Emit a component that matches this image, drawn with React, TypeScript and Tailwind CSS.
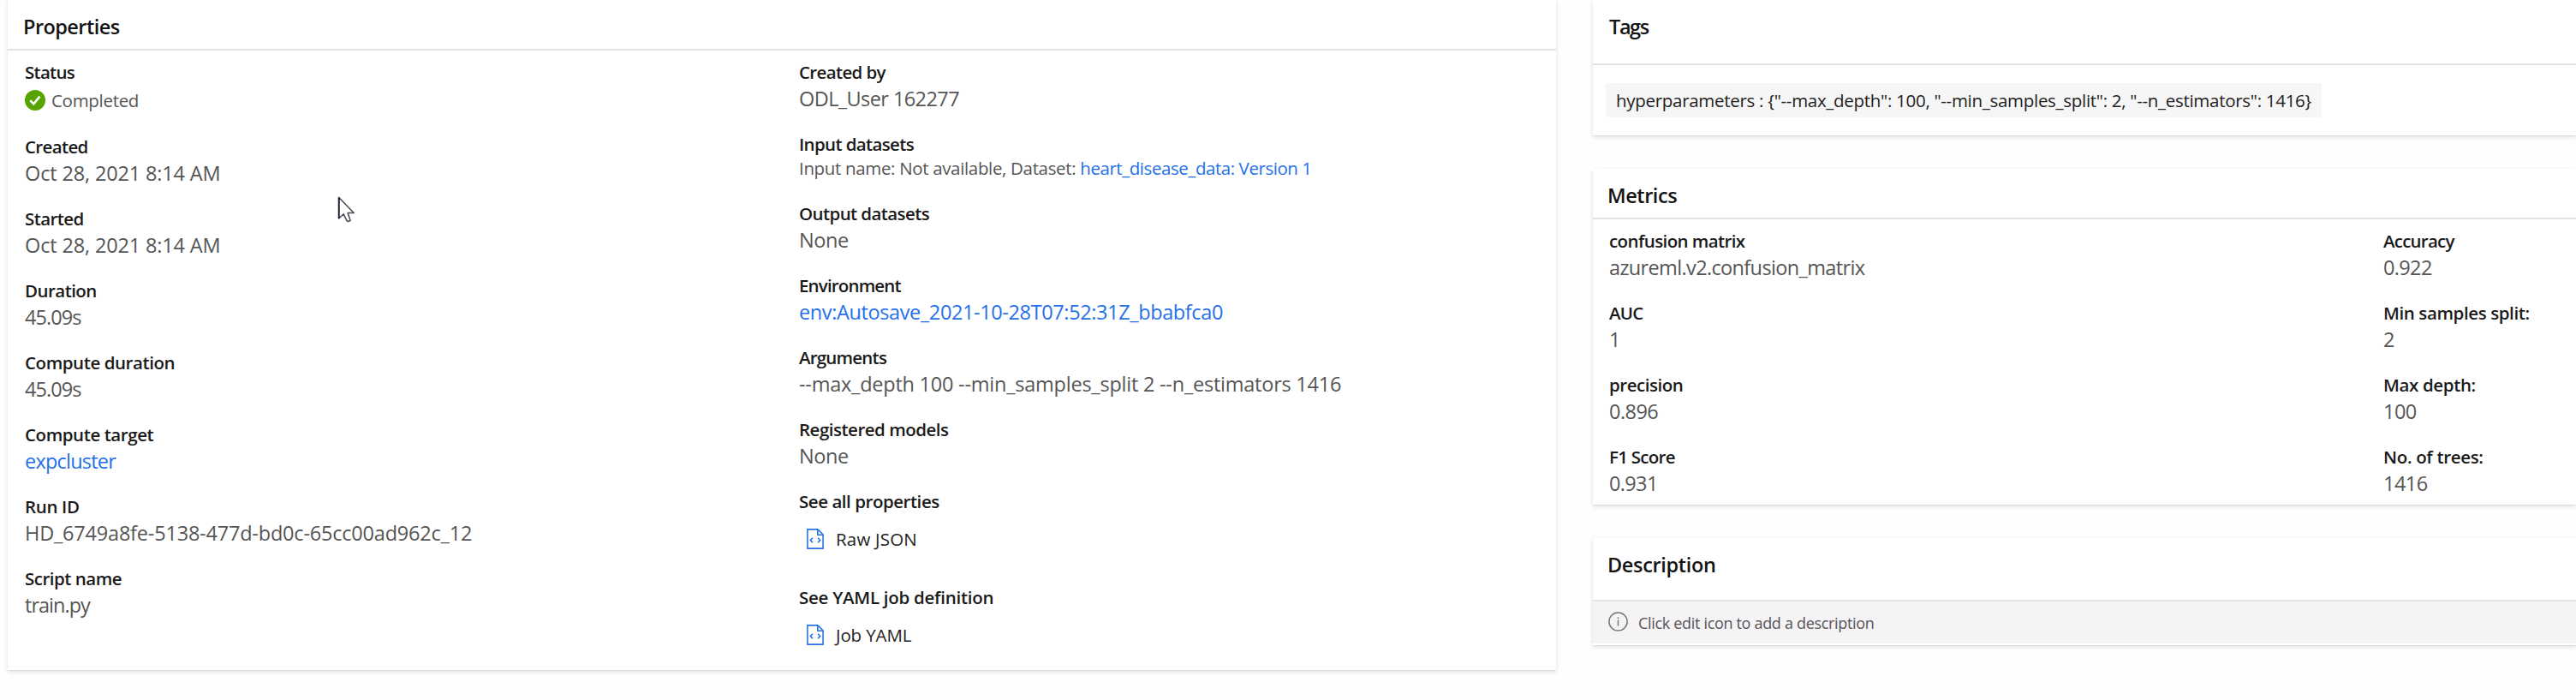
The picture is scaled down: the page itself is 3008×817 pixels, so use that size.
import type { ReactNode } from "react";

type Field = {
  label: string;
  labelTracking: string;
  value: ReactNode;
};

function Panel({ className, children }: { className: string; children: ReactNode }) {
  return (
    <section
      className={`bg-white shadow-[0_2px_5px_rgba(60,20,50,0.14),0_1px_1px_rgba(60,20,50,0.06)] ${className}`}
    >
      {children}
    </section>
  );
}

function PanelHeader({ title, className }: { title: string; className: string }) {
  return (
    <header className={`shrink-0 border-b-2 border-[#e4e3e4] pt-[15px] ${className}`}>
      <h2 className="text-[23.5px] leading-8 font-semibold text-[#141414]">{title}</h2>
    </header>
  );
}

function Value({ tracking, link = false, children }: { tracking: string; link?: boolean; children: ReactNode }) {
  return (
    <div className={`text-[23.5px] leading-8 ${tracking} ${link ? "text-[#2470e8]" : "text-[#555]"}`}>{children}</div>
  );
}

function FieldBlock({ label, labelTracking, value }: Field) {
  return (
    <div className="pb-[22px]">
      <div className={`text-[20.5px] leading-[30px] font-semibold text-[#1a1a1a] ${labelTracking}`}>{label}</div>
      {value}
    </div>
  );
}

function CheckIcon() {
  return (
    <svg className="size-6 shrink-0" viewBox="0 0 24 24">
      <circle cx="12" cy="12" r="12" fill="#57a300" />
      <path d="M6.3 12.2 10.3 16.4 17.4 7.6" fill="none" stroke="#fff" strokeWidth="2.6" />
    </svg>
  );
}

function FileCodeIcon() {
  return (
    <svg className="h-6 w-5 shrink-0" viewBox="0 0 20 24" fill="none" stroke="#2b74dd" strokeWidth="1.6">
      <path d="M.9.9H13L19.1 7V23.1H.9Z" />
      <path d="M12.8.9V7.2H19.1" />
      <path d="M7 10.8 4.4 13.5 7 16.2M13 10.8 15.6 13.5 13 16.2" />
    </svg>
  );
}

function InfoIcon() {
  return (
    <svg className="size-[23px] shrink-0" viewBox="0 0 23 23" fill="none" stroke="#777" strokeWidth="1.5">
      <circle cx="11.5" cy="11.5" r="10.6" />
      <path d="M11.5 9.5V16.6M11.5 6.2V7.9" />
    </svg>
  );
}

function FileAction({ tracking, children }: { tracking: string; children: ReactNode }) {
  return (
    <div className="flex h-[60px] items-start gap-[14px] pt-[17px] pl-[9px]">
      <FileCodeIcon />
      <span className={`-mt-[3px] text-[20.5px] leading-[30px] text-[#222] ${tracking}`}>{children}</span>
    </div>
  );
}

const leftFields: Field[] = [
  {
    label: "Status",
    labelTracking: "tracking-[-0.74px]",
    value: (
      <div className="flex h-[35px] items-start gap-[7px] pt-[6px]">
        <CheckIcon />
        <span className="-mt-[3px] text-[20.5px] leading-[30px] tracking-[-0.3px] text-[#555]">Completed</span>
      </div>
    ),
  },
  { label: "Created", labelTracking: "tracking-[-0.64px]", value: <Value tracking="tracking-[-0.15px]">Oct 28, 2021 8:14 AM</Value> },
  { label: "Started", labelTracking: "tracking-[-0.6px]", value: <Value tracking="tracking-[-0.15px]">Oct 28, 2021 8:14 AM</Value> },
  { label: "Duration", labelTracking: "tracking-[-0.54px]", value: <Value tracking="tracking-[-0.95px]">45.09s</Value> },
  { label: "Compute duration", labelTracking: "tracking-[-0.43px]", value: <Value tracking="tracking-[-0.95px]">45.09s</Value> },
  { label: "Compute target", labelTracking: "tracking-[-0.43px]", value: <Value link tracking="tracking-[-0.78px]">expcluster</Value> },
  { label: "Run ID", labelTracking: "tracking-[-0.34px]", value: <Value tracking="tracking-[-0.2px]">HD_6749a8fe-5138-477d-bd0c-65cc00ad962c_12</Value> },
  { label: "Script name", labelTracking: "tracking-[-0.5px]", value: <Value tracking="tracking-[-0.98px]">train.py</Value> },
];

const rightFields: Field[] = [
  { label: "Created by", labelTracking: "tracking-[-0.64px]", value: <Value tracking="tracking-[-0.58px]">ODL_User 162277</Value> },
  {
    label: "Input datasets",
    labelTracking: "tracking-[-0.64px]",
    value: (
      <div className="h-[29px] text-[20.5px] leading-[27px] text-[#555]">
        <span className="tracking-[-0.34px]">Input name: Not available, Dataset: </span>
        <span className="tracking-[-0.44px] text-[#2470e8]">heart_disease_data: Version 1</span>
      </div>
    ),
  },
  { label: "Output datasets", labelTracking: "tracking-[-0.6px]", value: <Value tracking="tracking-[-0.4px]">None</Value> },
  { label: "Environment", labelTracking: "tracking-[-0.84px]", value: <Value link tracking="tracking-[-0.38px]">env:Autosave_2021-10-28T07:52:31Z_bbabfca0</Value> },
  { label: "Arguments", labelTracking: "tracking-[-0.8px]", value: <Value tracking="tracking-[-0.23px]">--max_depth 100 --min_samples_split 2 --n_estimators 1416</Value> },
  { label: "Registered models", labelTracking: "tracking-[-0.5px]", value: <Value tracking="tracking-[-0.4px]">None</Value> },
  { label: "See all properties", labelTracking: "tracking-[-0.46px]", value: <FileAction tracking="tracking-[0.2px]">Raw JSON</FileAction> },
  { label: "See YAML job definition", labelTracking: "tracking-[-0.27px]", value: <FileAction tracking="tracking-[-0.12px]">Job YAML</FileAction> },
];

const metricsLeft: Field[] = [
  { label: "confusion matrix", labelTracking: "tracking-[-0.6px]", value: <Value tracking="tracking-[-0.64px]">azureml.v2.confusion_matrix</Value> },
  { label: "AUC", labelTracking: "tracking-[-0.75px]", value: <Value tracking="tracking-[-0.55px]">1</Value> },
  { label: "precision", labelTracking: "tracking-[-0.47px]", value: <Value tracking="tracking-[-0.55px]">0.896</Value> },
  { label: "F1 Score", labelTracking: "tracking-[-0.73px]", value: <Value tracking="tracking-[-0.65px]">0.931</Value> },
];

const metricsRight: Field[] = [
  { label: "Accuracy", labelTracking: "tracking-[-0.78px]", value: <Value tracking="tracking-[-0.65px]">0.922</Value> },
  { label: "Min samples split:", labelTracking: "tracking-[-0.4px]", value: <Value tracking="tracking-[-0.55px]">2</Value> },
  { label: "Max depth:", labelTracking: "tracking-[-0.37px]", value: <Value tracking="tracking-[-0.5px]">100</Value> },
  { label: "No. of trees:", labelTracking: "tracking-[-0.33px]", value: <Value tracking="tracking-[-0.5px]">1416</Value> },
];

function FieldColumn({ fields, className }: { fields: Field[]; className: string }) {
  return (
    <div className={className}>
      {fields.map((field) => (
        <FieldBlock key={field.label} {...field} />
      ))}
    </div>
  );
}

export default function App() {
  return (
    <main className="relative flex h-[817px] w-[3008px] gap-[43px] overflow-hidden bg-[#fefefe] pl-[9px] font-['Open_Sans',sans-serif] whitespace-nowrap">
      <Panel className="h-[782px] w-[1808px] shrink-0">
        <PanelHeader title="Properties" className="h-[59px] pl-[18px] tracking-[-0.55px]" />
        <div className="flex pt-[10px] pl-5">
          <FieldColumn fields={leftFields} className="w-[904px]" />
          <FieldColumn fields={rightFields} className="flex-1" />
        </div>
      </Panel>

      <div className="flex flex-1 flex-col gap-[39px]">
        <Panel className="h-[158px]">
          <PanelHeader title="Tags" className="h-[76px] pl-[19px] tracking-[-1.4px]" />
          <div className="pt-[21px] pl-[15px]">
            <div className="flex h-10 w-[836px] items-center rounded-[3px] bg-[#f6f6f6] pl-[12px] text-[20.5px] leading-[30px] tracking-[-0.29px] text-[#222]">
              {'hyperparameters : {"--max_depth": 100, "--min_samples_split": 2, "--n_estimators": 1416}'}
            </div>
          </div>
        </Panel>

        <Panel className="h-[392px]">
          <PanelHeader title="Metrics" className="h-[59px] pl-[17px] tracking-[-0.45px]" />
          <div className="flex pt-[10px] pl-[19px]">
            <FieldColumn fields={metricsLeft} className="w-[904px]" />
            <FieldColumn fields={metricsRight} className="flex-1" />
          </div>
        </Panel>

        <Panel className="h-[125px]">
          <PanelHeader title="Description" className="h-[74px] pl-[17px] tracking-[-0.35px]" />
          <div className="flex h-[49px] items-start gap-[12px] bg-[#f6f3f7] pt-[12px] pl-[18px]">
            <InfoIcon />
            <span className="text-[18px] leading-[26px] tracking-[-0.32px] text-[#555]">
              Click edit icon to add a description
            </span>
          </div>
        </Panel>
      </div>

      <svg className="absolute top-[229px] left-[394px] h-[31px] w-[21px]" viewBox="0 0 21 31">
        <path
          d="M1.7 1.5V26L7.2 20.8 11 28.6Q12.8 30.2 15.2 28.4L12 19.6H19.2Z"
          fill="#fff"
          stroke="#4a4856"
          strokeWidth="1.5"
          strokeLinejoin="round"
        />
        <path d="M1.7 1.5V26" stroke="#1b1a2b" strokeWidth="1.8" />
      </svg>
    </main>
  );
}
